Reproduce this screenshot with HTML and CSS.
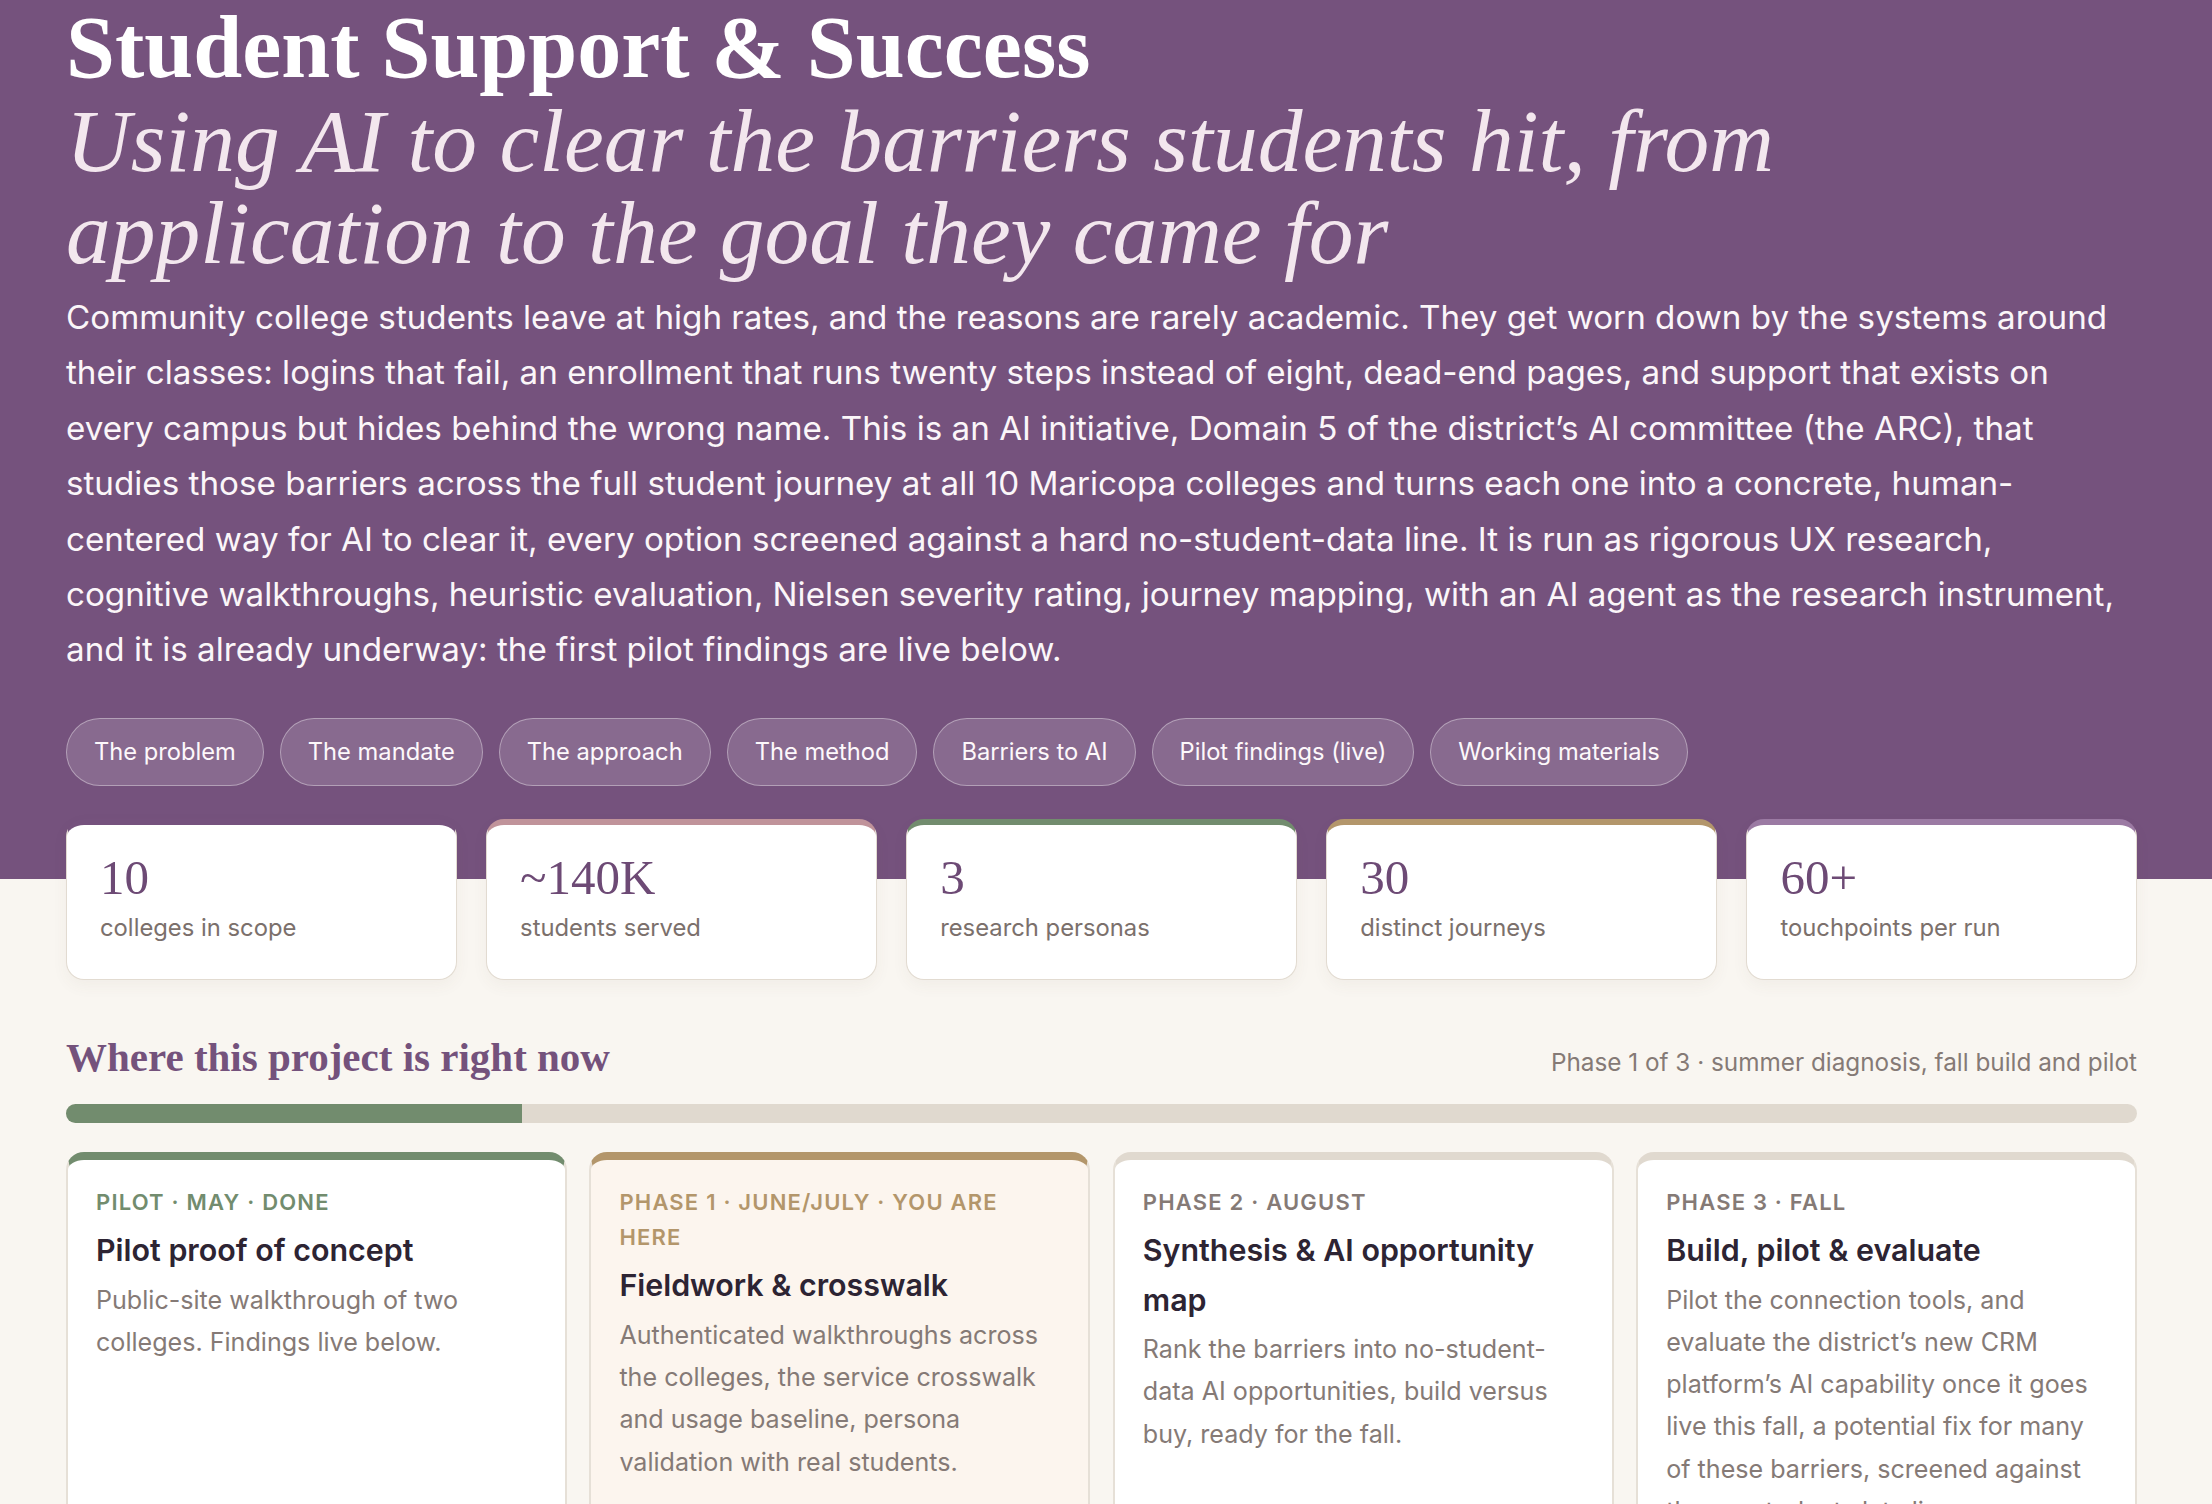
FILE: index.html
```html
<!DOCTYPE html>
<html lang="en">
<head>
<meta charset="utf-8">
<title>Student Support &amp; Success</title>
<link rel="stylesheet" href="styles.css">
</head>
<body>
<header class="hero">
  <div class="wrap">
    <h1 class="hero-title">Student Support &amp; Success</h1>
    <p class="hero-sub">Using AI to clear the barriers students hit, from application to the goal they came for</p>
    <p class="hero-lede">Community college students leave at high rates, and the reasons are rarely academic. They get worn down by the systems around their classes: logins that fail, an enrollment that runs twenty steps instead of eight, dead-end pages, and support that exists on every campus but hides behind the wrong name. This is an AI initiative, Domain 5 of the district’s AI committee (the ARC), that studies those barriers across the full student journey at all 10 Maricopa colleges and turns each one into a concrete, human-centered way for AI to clear it, every option screened against a hard no-student-data line. It is run as rigorous UX research, cognitive walkthroughs, heuristic evaluation, Nielsen severity rating, journey mapping, with an AI agent as the research instrument, and it is already underway: the first pilot findings are live below.</p>
    <nav class="pills">
      <a class="pill" href="#problem">The problem</a>
      <a class="pill" href="#mandate">The mandate</a>
      <a class="pill" href="#approach">The approach</a>
      <a class="pill" href="#method">The method</a>
      <a class="pill" href="#barriers">Barriers to AI</a>
      <a class="pill" href="#findings">Pilot findings (live)</a>
      <a class="pill" href="#materials">Working materials</a>
    </nav>
  </div>
</header>

<main class="wrap">
  <section class="stats">
    <div class="stat stat-plum"><div class="stat-num">10</div><div class="stat-label">colleges in scope</div></div>
    <div class="stat stat-rose"><div class="stat-num">~140K</div><div class="stat-label">students served</div></div>
    <div class="stat stat-sage"><div class="stat-num">3</div><div class="stat-label">research personas</div></div>
    <div class="stat stat-sand"><div class="stat-num">30</div><div class="stat-label">distinct journeys</div></div>
    <div class="stat stat-lilac"><div class="stat-num">60+</div><div class="stat-label">touchpoints per run</div></div>
  </section>

  <section class="status">
    <div class="status-head">
      <h2 class="status-title">Where this project is right now</h2>
      <span class="status-meta">Phase 1 of 3 · summer diagnosis, fall build and pilot</span>
    </div>
    <div class="progress"><div class="progress-fill" style="width: 22%"></div></div>

    <div class="phases">
      <article class="phase phase-done">
        <div class="phase-label">Pilot · May · Done</div>
        <h3 class="phase-title">Pilot proof of concept</h3>
        <p class="phase-desc">Public-site walkthrough of two colleges. Findings live below.</p>
      </article>
      <article class="phase phase-current">
        <div class="phase-label">Phase 1 · June/July · You are here</div>
        <h3 class="phase-title">Fieldwork &amp; crosswalk</h3>
        <p class="phase-desc">Authenticated walkthroughs across the colleges, the service crosswalk and usage baseline, persona validation with real students.</p>
      </article>
      <article class="phase">
        <div class="phase-label">Phase 2 · August</div>
        <h3 class="phase-title">Synthesis &amp; AI opportunity map</h3>
        <p class="phase-desc">Rank the barriers into no-student-data AI opportunities, build versus buy, ready for the fall.</p>
      </article>
      <article class="phase">
        <div class="phase-label">Phase 3 · Fall</div>
        <h3 class="phase-title">Build, pilot &amp; evaluate</h3>
        <p class="phase-desc">Pilot the connection tools, and evaluate the district’s new CRM platform’s AI capability once it goes live this fall, a potential fix for many of these barriers, screened against the no-student-data line.</p>
      </article>
    </div>
  </section>
</main>
</body>
</html>
```
FILE: styles.css
```css
* { box-sizing: border-box; }

body {
  margin: 0;
  background: #f9f6f1;
  font-family: "Inter", "Noto Sans", sans-serif;
  color: #2d2433;
}

.wrap {
  width: 2071px;
  margin-left: 66px;
}

/* ---------- hero ---------- */
.hero {
  background: #75527d;
  padding: 4px 0 93px;
  color: #fff;
}

.hero-title {
  margin: 0;
  font-family: "Liberation Serif", serif;
  font-weight: 700;
  font-size: 88px;
  line-height: 88px;
  color: #ffffff;
}

.hero-sub {
  margin: 3px 0 0;
  max-width: 1800px;
  font-family: "Liberation Serif", serif;
  font-style: italic;
  font-size: 89.5px;
  line-height: 92px;
  color: #f3e7ee;
}

.hero-lede {
  margin: 11px 0 0;
  font-size: 33.2px;
  line-height: 55.4px;
  color: #fbf6f9;
}

.pills {
  display: flex;
  flex-wrap: wrap;
  gap: 16px;
  margin-top: 40px;
}

.pill {
  display: inline-flex;
  align-items: center;
  height: 68px;
  padding: 0 27px;
  border: 1.5px solid rgba(255, 255, 255, 0.36);
  border-radius: 34px;
  background: rgba(255, 255, 255, 0.14);
  color: #fdf8fb;
  font-size: 23.7px;
  text-decoration: none;
}

/* ---------- stat cards ---------- */
.stats {
  display: grid;
  grid-template-columns: repeat(5, 1fr);
  gap: 29.5px;
  margin-top: -60px;
}

.stat {
  background: #ffffff;
  border: 1.5px solid #e2dbd1;
  border-top: 6px solid #75527d;
  border-radius: 18px;
  padding: 28px 30px 34px 33px;
  box-shadow: 0 6px 16px rgba(90, 70, 60, 0.05);
}

.stat-rose { border-top-color: #c0939a; }
.stat-sage { border-top-color: #728c6e; }
.stat-sand { border-top-color: #b3966b; }
.stat-lilac { border-top-color: #9b7aa3; }

.stat-num {
  font-family: "Liberation Serif", serif;
  font-size: 49px;
  line-height: 49px;
  color: #6d4a75;
}

.stat-label {
  margin-top: 9px;
  font-size: 23.8px;
  line-height: 34px;
  color: #7b706c;
}

/* ---------- project status ---------- */
.status { margin-top: 52px; }

.status-head {
  display: flex;
  justify-content: space-between;
  align-items: baseline;
}

.status-title {
  margin: 0;
  font-family: "Liberation Serif", serif;
  font-weight: 700;
  font-size: 41px;
  line-height: 50px;
  color: #74527c;
}

.status-meta {
  font-size: 24.3px;
  color: #857a76;
}

.progress {
  margin-top: 22px;
  height: 19px;
  border-radius: 10px;
  background: #e0d9cf;
  overflow: hidden;
}

.progress-fill {
  height: 100%;
  background: #728c6e;
}

.phases {
  display: grid;
  grid-template-columns: repeat(4, 1fr);
  gap: 22.6px;
  margin-top: 29px;
}

.phase {
  background: #ffffff;
  border: 2px solid #e6e0d7;
  border-top: 8px solid #e0d9cf;
  border-radius: 18px;
  padding: 25px 28px 60px;
  min-height: 400px;
}

.phase-done { border-top-color: #728c6e; }
.phase-current { border-top-color: #b3966b; background: #fcf5ee; }

.phase-label {
  font-size: 22px;
  line-height: 35.3px;
  font-weight: 600;
  letter-spacing: 1.2px;
  text-transform: uppercase;
  color: #857a76;
}

.phase-done .phase-label { color: #728c6e; }
.phase-current .phase-label { color: #b3966b; }

.phase-title {
  margin: 6px 0 0;
  font-size: 30.4px;
  line-height: 49.4px;
  font-weight: 600;
  color: #2d2433;
}

.phase-desc {
  margin: 3px 0 0;
  font-size: 25.1px;
  line-height: 42.3px;
  color: #857a76;
}
```
